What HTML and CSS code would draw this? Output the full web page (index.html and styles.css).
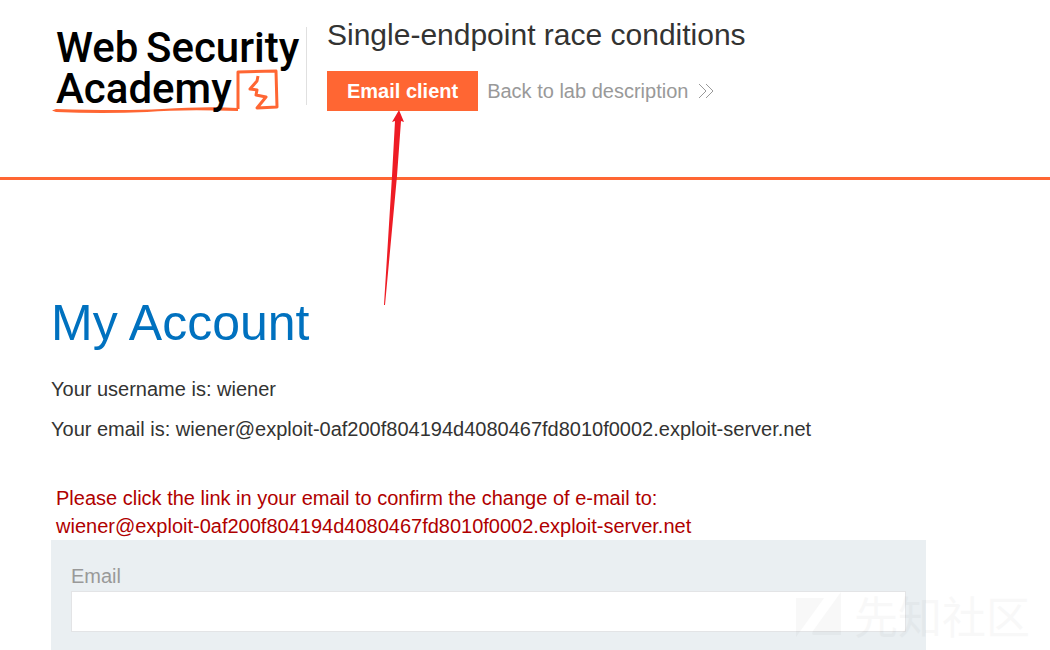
FILE: index.html
```html
<!DOCTYPE html>
<html lang="en">
<head>
<meta charset="utf-8">
<title>Single-endpoint race conditions</title>
<link rel="stylesheet" href="styles.css">
</head>
<body>
<header class="lab-header">
  <svg class="logo" viewBox="0 0 255 100" role="img" aria-label="Web Security Academy">
    <path class="logo-line" d="M0 90.500 4 89Q70 91 110 89Q155 86 186 88L186 91Q130 89 95 92Q50 94 4 92Z"/>
    <path class="logo-box" d="M186 89 186 52 224 51 225 87 205 88 214 77 204 75 205 70 198 69 205 61 206 56"/>
    <g class="logo-text">
      <text x="4" y="42">Web</text>
      <text x="94" y="42">Security</text>
      <text x="4" y="83">Academy</text>
    </g>
  </svg>
  <div class="title-block">
    <h2 class="lab-title">Single-endpoint race conditions</h2>
    <div class="actions">
      <a class="button-orange" href="#email">Email client</a>
      <a class="link-back" href="#lab">Back to lab description
        <svg class="chevrons" viewBox="0 0 16 16" aria-hidden="true"><path d="M1 1 8 8 1 15M8 1 15 8 8 15"/></svg>
      </a>
    </div>
  </div>
</header>
<main class="account">
  <h1 class="page-title">My Account</h1>
  <p class="detail">Your username is: wiener</p>
  <p class="detail">Your email is: wiener@exploit-0af200f804194d4080467fd8010f0002.exploit-server.net</p>
  <p class="warning">Please click the link in your email to confirm the change of e-mail to: <span class="address">wiener@exploit-0af200f804194d4080467fd8010f0002.exploit-server.net</span></p>
  <form class="email-form">
    <label class="field-label" for="email">Email</label>
    <input class="field" id="email" type="email" name="email">
  </form>
</main>
<svg class="arrow" viewBox="0 0 20 196" aria-hidden="true"><path d="M16 0 21 12 18 11 14 66 2 195 1 195 9 66 12 11 9 12Z"/></svg>
<div class="watermark" aria-hidden="true">
  <svg class="watermark-mark" viewBox="0 0 46 46"><path d="M0 6H28L0 45ZM45 0V43H18Q15 43 17 39Z"/></svg>
  <span>先知社区</span>
</div>
</body>
</html>
```
FILE: styles.css
```css
* { box-sizing: border-box; }
body {
  margin: 0;
  overflow: hidden;
  background: #fff;
  color: #333332;
  font: 20px/28px "Liberation Sans", Arial, sans-serif;
}
.lab-header {
  display: flex;
  align-items: flex-start;
  min-height: 180px;
  padding: 17px 124px 0 52px;
  border-bottom: 3px solid #ff6633;
}
.logo { width: 255px; height: 100px; margin-top: 3px; flex: none; overflow: visible; }
.logo-text { font: 500 42px "Roboto", sans-serif; fill: #000; }
.logo-line { fill: #ff6633; }
.logo-box { fill: none; stroke: #ff6633; stroke-width: 3px; stroke-linejoin: round; }
.title-block { position: relative; padding-left: 20px; }
.title-block::before {
  content: "";
  position: absolute;
  left: -1px;
  top: 10px;
  height: 78px;
  border-left: 1px solid #e0e0e0;
}
.lab-title { margin: 0 0 18px; font-size: 30px; line-height: 36px; font-weight: 400; }
.actions { display: flex; align-items: center; gap: 9px; }
.button-orange {
  padding: 6px 20px;
  background: #ff6633;
  color: #fff;
  font-weight: 700;
  text-decoration: none;
}
.link-back {
  display: flex;
  align-items: center;
  gap: 10px;
  color: #999;
  text-decoration: none;
}
.chevrons { width: 16px; height: 16px; fill: none; stroke: #999; }
.account { padding: 114px 124px 0 51px; }
.page-title { margin: 0 0 23px; color: #0071bf; font-size: 50px; line-height: 58px; font-weight: 400; }
.detail { margin: 0 0 12px; }
.warning { margin: 41px 0 0; padding: 0 5px; color: #b00000; }
.address { display: inline-block; max-width: 100%; vertical-align: top; overflow-wrap: anywhere; }
.email-form { padding: 22px 20px 18px; background: #eaeff2; }
.field-label { display: block; margin-bottom: 1px; color: #999; }
.field {
  display: block;
  width: 100%;
  height: 41px;
  padding: 0 10px;
  border: 1px solid #e3e4e6;
  background: #fff;
  font: inherit;
}
.arrow {
  position: absolute;
  left: 383px;
  top: 110px;
  width: 20px;
  height: 196px;
  overflow: visible;
  fill: #ee1c25;
}
.watermark {
  position: absolute;
  right: 20px;
  bottom: 10px;
  display: flex;
  align-items: center;
  gap: 12px;
  color: #000;
  opacity: 0.025;
  font: 400 44px/50px "Noto Sans CJK SC", sans-serif;
}
.watermark-mark { width: 46px; height: 46px; }
```
